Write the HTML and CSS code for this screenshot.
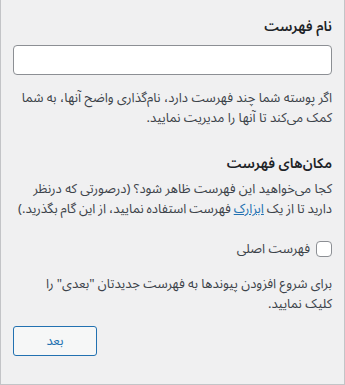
FILE: index.html
```html
<!DOCTYPE html>
<html lang="fa" dir="rtl">
<head>
    <meta charset="UTF-8">
    <meta name="viewport" content="width=device-width, initial-scale=1.0">
    <title>فهرست جدید</title>
    <link rel="stylesheet" href="styles.css">
</head>
<body>

<div class="panel">
    <label class="field-title" for="menuName">نام فهرست</label>
    <input type="text" id="menuName" class="text-input">
    <p class="desc name-note">
        <span class="line">اگر پوسته شما چند فهرست دارد، نام‌گذاری واضح آنها، به شما</span>
        <span class="line">کمک می‌کند تا آنها را مدیریت نمایید.</span>
    </p>

    <h3 class="field-title loc-title">مکان‌های فهرست</h3>
    <p class="desc loc-note">
        <span class="line">کجا می‌خواهید این فهرست ظاهر شود؟ (درصورتی که درنظر</span>
        <span class="line fit">دارید تا از یک <a href="#">ابزارک</a> فهرست استفاده نمایید، از این گام بگذرید.)</span>
    </p>
    <label class="check-row">
        <input type="checkbox" class="check">
        <span>فهرست اصلی</span>
    </label>

    <p class="desc next-note">
        <span class="line">برای شروع افزودن پیوندها به فهرست جدیدتان "بعدی" را</span>
        <span class="line">کلیک نمایید.</span>
    </p>

    <button class="btn">بعد</button>
</div>

</body>
</html>
```

FILE: styles.css
```css
* { box-sizing: border-box; }
html, body { margin: 0; padding: 0; }
body { font-family: "Noto Sans Arabic", "DejaVu Sans", sans-serif; font-size: 13px; color: #3c434a; background: #fff; }
.panel { width: 345px; height: 385px; background: #f0f0f1; border: 1px solid #c3c4c7; border-top: none; padding: 17px 12px 0 12px; }
.field-title { display: block; margin: 0; font-size: 14px; font-weight: 600; color: #1d2327; line-height: 20px; }
.text-input { display: block; width: 100%; height: 30px; margin: 8px 0 0; border: 1px solid #8c8f94; border-radius: 4px; background: #fff; }
.desc { margin: 0; line-height: 20px; color: #3c434a; }
.desc .line { display: block; white-space: nowrap; }
.desc .fit { word-spacing: -0.5px; }
.desc a { color: #2271b1; }
.name-note { margin-top: 13px; }
.loc-title { margin-top: 26px; }
.loc-note { margin-top: 5px; }
.check-row { display: flex; align-items: center; gap: 6px; margin-top: 20px; color: #3c434a; line-height: 20px; }
.check { -webkit-appearance: none; appearance: none; width: 16px; height: 16px; margin: 0; border: 1px solid #8c8f94; border-radius: 4px; background: #fff; }
.next-note { margin-top: 15px; }
.btn { display: block; width: 84px; height: 30px; padding: 0; margin: 12px auto 0 0; border: 1px solid #2271b1; border-radius: 3px; background: #f6f7f7; color: #2271b1; font-family: inherit; font-size: 13px; cursor: pointer; }
```
